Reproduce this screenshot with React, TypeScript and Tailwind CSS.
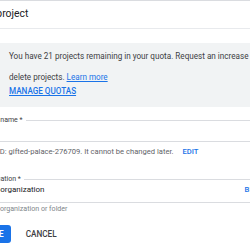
export default function App() {
  return (
    <div className="h-[250px] w-[250px] overflow-hidden border-t border-[#dadce0] bg-white font-['Roboto',sans-serif]">
      <div className="flex h-[28px] items-center border-b border-[#e8eaed]">
        <h1 className="ml-[-27px] whitespace-nowrap text-[10.4px] leading-none text-[#202124]">New project</h1>
      </div>

      <div className="mt-[14px] bg-[#f1f3f4] pb-[10px] pt-[7px] text-[8.15px] text-[#3c4043]">
        <div className="flex h-[12px] items-center whitespace-nowrap pl-[9px] leading-none">
          You have 21 projects remaining in your quota. Request an increase or
        </div>
        <div className="mt-[9px] flex h-[12px] items-center whitespace-nowrap pl-[9px] leading-none">
          delete projects.&nbsp;<a className="text-[#1a73e8] underline">Learn more</a>
        </div>
        <div className="mt-[2px] flex h-[12px] items-center pl-[9px] leading-none">
          <a className="font-medium text-[#1a73e8] underline">MANAGE QUOTAS</a>
        </div>
      </div>

      <div className="mt-[9px]">
        <div className="flex h-[8px] items-center">
          <span className="ml-[-23.5px] whitespace-nowrap text-[7px] leading-none text-[#3c4043]">Project name *</span>
          <div className="ml-[3px] h-px flex-1 bg-[#dadce0]" />
        </div>
        <div className="h-[17px]" />
        <div className="h-px bg-[#dadce0]" />
      </div>

      <div className="mt-[5px] flex h-[10px] items-center whitespace-nowrap text-[7.6px] leading-none text-[#5f6368]">
        <span className="ml-[-28px]">Project ID: gifted-palace-276709. It cannot be changed later.</span>
        <span className="ml-[9px] font-medium text-[#1a73e8]">EDIT</span>
      </div>

      <div className="mt-[18px]">
        <div className="flex h-[8px] items-center">
          <span className="ml-[-11px] whitespace-nowrap text-[7px] leading-none text-[#3c4043]">Location *</span>
          <div className="ml-[3px] h-px flex-1 bg-[#dadce0]" />
        </div>
        <div className="flex h-[14px] items-center justify-between whitespace-nowrap leading-none">
          <span className="ml-[-12px] text-[8px] text-[#202124]">No organization</span>
          <span className="mr-[-25px] text-[7.6px] font-medium text-[#1a73e8]">BROWSE</span>
        </div>
        <div className="h-[5px]" />
        <div className="h-px bg-[#dadce0]" />
      </div>

      <div className="mt-[2px] flex h-[8px] items-center whitespace-nowrap text-[7.1px] leading-none text-[#80868b]">
        <span className="ml-[-22.5px]">Parent organization or folder</span>
      </div>

      <div className="mt-[12px] flex items-center gap-[8px] whitespace-nowrap text-[8.2px] font-medium leading-none">
        <button className="ml-[-33px] flex h-[18px] items-center rounded-[3px] bg-[#1a73e8] px-[7px] text-white">CREATE</button>
        <button className="flex h-[18px] items-center px-[7px] text-[#3c4043]">CANCEL</button>
      </div>
    </div>
  );
}
